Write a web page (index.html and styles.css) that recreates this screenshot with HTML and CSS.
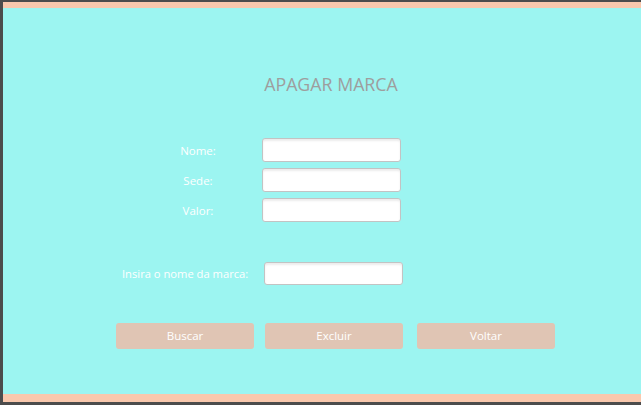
FILE: index.html
```html
<!DOCTYPE html>
<html>
<head>
<meta charset="utf-8">
<link rel="stylesheet" href="styles.css">
</head>
<body>
<div class="frame">
  <div class="window">
    <div class="panel">
      <h1 class="title">APAGAR MARCA</h1>
      <div class="fields">
        <label class="lbl">Nome:</label>
        <input class="field" type="text">
        <label class="lbl">Sede:</label>
        <input class="field" type="text">
        <label class="lbl">Valor:</label>
        <input class="field" type="text">
      </div>
      <div class="search">
        <label class="lbl lbl-search">Insira o nome da marca:</label>
        <input class="field" type="text">
      </div>
      <div class="actions">
        <button class="btn">Buscar</button>
        <button class="btn">Excluir</button>
        <button class="btn btn-last">Voltar</button>
      </div>
    </div>
  </div>
</div>
</body>
</html>
```
FILE: styles.css
```css
html, body {
  margin: 0;
  padding: 0;
  background: #4c4c4c;
  overflow: hidden;
}
.frame {
  width: 641px;
  height: 405px;
  box-sizing: border-box;
  padding: 2px 0 3px 3px;
}
.window {
  width: 638px;
  height: 400px;
  box-sizing: border-box;
  border-top: 6px solid #f9c8ad;
  border-bottom: 8px solid #f9c8ad;
  background: #9cf5f1;
}
.panel {
  height: 100%;
  display: flex;
  flex-direction: column;
  font-family: "Open Sans", "Noto Sans", sans-serif;
}
.title {
  margin: 64px 0 0 0;
  padding-left: 18px;
  text-align: center;
  font-size: 17.8px;
  line-height: 24px;
  font-weight: 400;
  color: #9e9e9e;
}
.fields {
  margin: 42px 0 0 160px;
  display: grid;
  grid-template-columns: 70px 139px;
  column-gap: 29px;
  row-gap: 6px;
  align-items: center;
}
.lbl {
  color: #ffffff;
  font-size: 11.5px;
  text-align: center;
}
.lbl-search {
  font-size: 11.2px;
}
.field {
  box-sizing: border-box;
  width: 139px;
  height: 24px;
  margin: 0;
  border: 1px solid #c3c3c3;
  border-radius: 3px;
  background: #ffffff;
  box-shadow: inset 0 2px 2px rgba(0,0,0,0.08);
  outline: none;
}
.search {
  margin: 40px 0 0 119px;
  display: flex;
  align-items: center;
  gap: 16px;
}
.search .field {
  height: 23px;
}
.actions {
  margin: 38px 0 0 113px;
  display: flex;
  gap: 11px;
}
.btn {
  width: 138px;
  height: 26px;
  margin: 0;
  border: none;
  border-radius: 3px;
  background: #e0c5b4;
  color: #ffffff;
  font-family: "Open Sans", "Noto Sans", sans-serif;
  font-size: 11.5px;
  padding: 0 0 2px 0;
}
.btn-last {
  margin-left: 3px;
}
```
